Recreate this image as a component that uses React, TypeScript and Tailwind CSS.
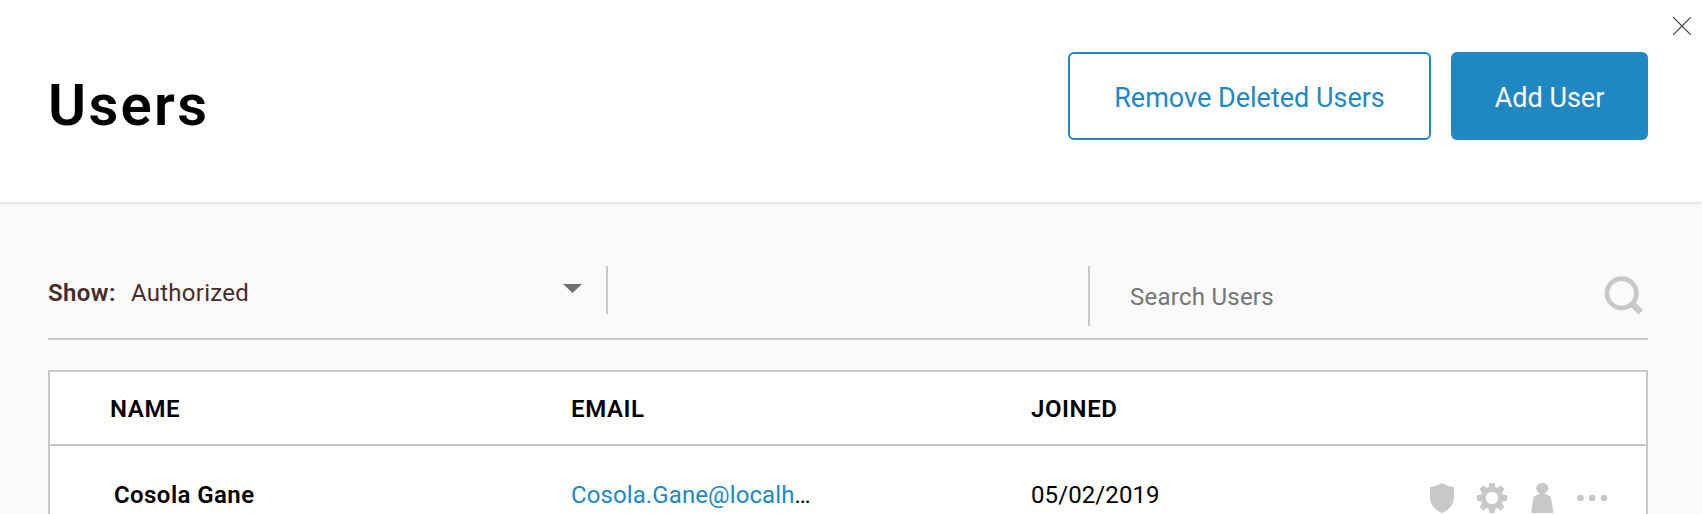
import React from "react";

const GEAR_ANGLES = [0, 45, 90, 135, 180, 225, 270, 315];

function CloseIcon() {
  return (
    <svg className="block h-[18px] w-[18px]" viewBox="0 0 18 18" fill="none" stroke="#3c3c3c" strokeWidth="1.2">
      <path d="M0.3 0.3 17.7 17.7M17.7 0.3 0.3 17.7" />
    </svg>
  );
}

function SearchIcon() {
  return (
    <svg className="block h-10 w-10" viewBox="0 0 40 40" fill="none" stroke="#c8c8c8">
      <circle cx="17.7" cy="17.3" r="14.7" strokeWidth="4.7" />
      <path d="M28 27.6 36.7 36.3" strokeWidth="6.4" />
    </svg>
  );
}

function ShieldIcon() {
  return (
    <svg className="block h-[30px] w-6" viewBox="0 0 24 30" fill="#c8c8c8">
      <path d="M12 0C9 2.3 4.5 3.8 0 4V14.5C0 21.500 5.5 27.5 12 30C18.5 27.5 24 21.500 24 14.5V4C19.5 3.8 15 2.3 12 0Z" />
    </svg>
  );
}

function GearIcon() {
  return (
    <svg className="block h-[30px] w-[30px]" viewBox="-15 -15 30 30" fill="#c8c8c8">
      <circle r="8.7" fill="none" stroke="#c8c8c8" strokeWidth="5" />
      {GEAR_ANGLES.map((angle) => (
        <path key={angle} d="M-2.7 -15H2.7L3.4 -10H-3.4Z" transform={`rotate(${angle})`} />
      ))}
    </svg>
  );
}

function PersonIcon() {
  return (
    <svg className="block h-[30px] w-[23px]" viewBox="0 0 23 30" fill="#c8c8c8">
      <ellipse cx="11.3" cy="5.3" rx="6.1" ry="5.4" />
      <path d="M8.5 9H14V11C16.5 11.6 18.5 12.6 19.8 14L22.3 28.5C22.4 29.4 21.9 30 21 30H1.5C.6 30 .1 29.4 .2 28.5L2.6 14C4 12.6 6 11.6 8.5 11Z" />
    </svg>
  );
}

function MoreIcon() {
  return (
    <svg className="block h-[30px] w-[31px]" viewBox="0 0 31 30" fill="#c8c8c8">
      <circle cx="3.5" cy="15" r="3.3" />
      <circle cx="15.2" cy="15" r="3.3" />
      <circle cx="27" cy="15" r="3.3" />
    </svg>
  );
}

function Header() {
  return (
    <header className="relative flex h-[202px] shrink-0 items-start justify-between bg-white pr-[54px] pl-12 shadow-[0_1px_4px_rgba(0,0,0,0.15)]">
      <h1 className="pt-[71px] text-[58px] leading-[68px] font-semibold tracking-[2.3px]">Users</h1>
      <div className="flex gap-5 pt-[52px] text-[27px] leading-[33px]">
        <button className="h-[88px] w-[363px] rounded-md border-2 border-[#1f88c3] pt-[5px] text-[#1f88c3]">
          Remove Deleted Users
        </button>
        <button className="h-[88px] w-[197px] rounded-md bg-[#1f88c3] pt-[5px] text-white">Add User</button>
      </div>
      <button aria-label="Close" className="absolute top-[17px] right-[11px]">
        <CloseIcon />
      </button>
    </header>
  );
}

function Filters() {
  return (
    <div className="flex h-[74px] items-start border-b-2 border-[#c8c8c8] text-2xl leading-7 tracking-[0.25px]">
      <div className="flex h-12 w-[560px] items-start border-r-2 border-[#c8c8c8] pt-[13px] text-[#482c2c]">
        <span className="w-[83px] font-semibold tracking-[0.4px]">Show:</span>
        <span className="grow">Authorized</span>
        <svg className="mt-[5px] mr-6 block h-[9px] w-[19px]" viewBox="0 0 19 9" fill="#6f7272">
          <path d="M0 0H19L9.5 9Z" />
        </svg>
      </div>
      <div className="h-[60px] w-[482px] border-r-2 border-[#c8c8c8]" />
      <div className="flex grow items-start justify-between pr-1 pl-10">
        <span className="pt-[17px] text-[#757575]">Search Users</span>
        <div className="pt-[10px]">
          <SearchIcon />
        </div>
      </div>
    </div>
  );
}

function UsersTable() {
  return (
    <div className="mt-[30px] border-2 border-[#c8c8c8] bg-white text-2xl leading-7 tracking-[0.1px]">
      <div className="flex h-[74px] border-b-2 border-[#c8c8c8] pt-[23px] pl-[60px] font-semibold tracking-[0.6px]">
        <span className="w-[461px]">NAME</span>
        <span className="w-[460px]">EMAIL</span>
        <span>JOINED</span>
      </div>
      <div className="flex h-[110px] pt-[35px] pl-16">
        <span className="w-[457px] font-semibold tracking-[0.42px]">Cosola Gane</span>
        <span className="w-[460px]">
          <a className="text-[#1f88c3]">Cosola.Gane@localh</a>…
        </span>
        <span className="w-[399px]">05/02/2019</span>
        <div className="flex pt-[2px]">
          <ShieldIcon />
          <div className="ml-[23px]">
            <GearIcon />
          </div>
          <div className="ml-6">
            <PersonIcon />
          </div>
          <div className="ml-[23px]">
            <MoreIcon />
          </div>
        </div>
      </div>
    </div>
  );
}

export default function App() {
  return (
    <div className="flex h-[514px] flex-col overflow-hidden bg-[#fafafa] font-[Roboto,sans-serif] text-black">
      <Header />
      <main className="px-12 pt-16 pr-[54px]">
        <Filters />
        <UsersTable />
      </main>
    </div>
  );
}
